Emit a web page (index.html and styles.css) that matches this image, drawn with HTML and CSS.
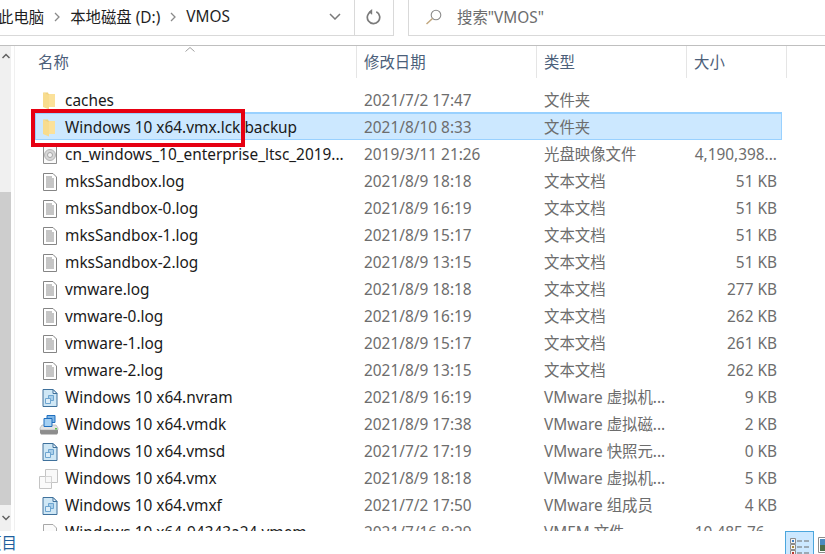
FILE: index.html
```html
<!DOCTYPE html>
<html lang="zh-CN">

<head>
  <meta charset="UTF-8">
  <title>VMOS</title>
  <link rel="stylesheet" href="styles.css">
</head>

<body>
  <svg class="sprites" xmlns="http://www.w3.org/2000/svg">
    <symbol id="i-folder" viewBox="0 0 16 18">
      <path d="M6 2h7v13H6z" fill="#fbe19a" />
      <path d="M1 .5l6 2.500v14.500l-6-2.500z" fill="#f8dc8e" />
      <path d="M1 .5h5l1 2.500H6z" fill="#f0d27e" />
    </symbol>
    <symbol id="i-disc" viewBox="0 0 16 18">
      <path d="M1.500 .5h13v17h-13z" fill="#fafafa" stroke="#8f8f8f" />
      <circle cx="8" cy="9" r="5.500" fill="#d6d6d6" stroke="#b4b4b4" />
      <circle cx="8" cy="9" r="2.500" fill="#f4f4f4" stroke="#a6a6a6" />
    </symbol>
    <symbol id="i-text" viewBox="0 0 16 18">
      <path d="M1.500 .5h9.500l3.500 3.500v13.500h-13z" fill="#fff" stroke="#858585" />
      <path d="M4 4h6M4 6h8M4 8h8M4 10h8M4 12h8M4 14h8" stroke="#8c8c8c" />
    </symbol>
    <symbol id="i-vmdoc" viewBox="0 0 16 18">
      <path d="M1 .5h10l4 4v13H1z" fill="#cfe7f5" stroke="#3f719c" />
      <path d="M11 .5v4h4z" fill="#f2f8fc" stroke="#3f719c" />
      <path d="M6.500 6.500h5v5h-5z" fill="#a9cfea" stroke="#6ea5d0" />
      <path d="M3.500 9.500h5v5h-5z" fill="#dcedf8" stroke="#6ea5d0" />
    </symbol>
    <symbol id="i-vmdisk" viewBox="0 0 20 20">
      <path d="M1 13h18v5l-1 1.500H2L1 18z" fill="#8d8d8d" />
      <path d="M1 13l2-3h14l2 3v2H1z" fill="#e4e4e4" stroke="#999" stroke-width=".5" />
      <path d="M8 .5h8v7H8z" fill="#7fb6e6" stroke="#1f6fbf" />
      <path d="M5 3.500h8v8H5z" fill="#a5d0f2" stroke="#1f6fbf" />
      <path d="M16 13h2v1.500h-2z" fill="#5ec24a" />
    </symbol>
    <symbol id="i-vmx" viewBox="0 0 20 20">
      <path d="M.5 7.500h12v12H.5z" fill="#fafafa" stroke="#c4c4c4" />
      <path d="M6.500 .5h12v13h-12z" fill="#f6f6f6" fill-opacity=".7" stroke="#c4c4c4" />
      <path d="M6.500 7.500h6v6h-6z" fill="none" stroke="#d4d4d4" />
    </symbol>
    <symbol id="i-blank" viewBox="0 0 16 18">
      <path d="M1.500 .5h9.500l3.500 3.500v13.500h-13z" fill="#fbfbfb" stroke="#a8a8a8" />
    </symbol>
  </svg>

  <header class="toolbar">
    <div class="address">
      <span class="crumb crumb-first">此电脑</span>
      <svg class="crumb-sep" viewBox="0 0 6 10"><path d="M1 1l4 4-4 4" fill="none" stroke="#8a8a8a" stroke-width="1.300" /></svg>
      <span class="crumb">本地磁盘 (D:)</span>
      <svg class="crumb-sep" viewBox="0 0 6 10"><path d="M1 1l4 4-4 4" fill="none" stroke="#8a8a8a" stroke-width="1.300" /></svg>
      <span class="crumb">VMOS</span>
      <svg class="drop" viewBox="0 0 12 7"><path d="M1 1l5 5 5-5" fill="none" stroke="#7a7a7a" stroke-width="1.500" /></svg>
      <div class="refresh">
        <svg viewBox="0 0 16 16" width="16" height="16">
          <path d="M10.300 2.800A6.200 6.200 0 1 1 5.200 2.600" fill="none" stroke="#7b7b7b" stroke-width="1.700" />
          <path d="M9.200 0v5.500h-.6L5.800 2.800z" fill="#7b7b7b" transform="translate(-3 0)" />
        </svg>
      </div>
    </div>
    <div class="search">
      <svg viewBox="0 0 18 16" width="18" height="16">
        <circle cx="11" cy="6" r="4.800" fill="none" stroke="#8b8b8b" stroke-width="1.100" />
        <path d="M7.500 9.500L1.500 15" stroke="#c2a77e" stroke-width="1.500" />
      </svg>
      <span>搜索"VMOS"</span>
    </div>
  </header>

  <main class="body">
    <div class="nav-edge">
      <div class="scroll">
        <svg class="scroll-up" viewBox="0 0 8 6"><path d="M.5 5L4 1.500 7.500 5" fill="none" stroke="#606060" stroke-width="1.500" /></svg>
        <div class="scroll-thumb"></div>
        <svg class="scroll-down" viewBox="0 0 8 6"><path d="M.5 1L4 4.500 7.500 1" fill="none" stroke="#606060" stroke-width="1.500" /></svg>
      </div>
    </div>

    <section class="files">
      <div class="head">
        <div class="head-cell head-name">名称
          <svg class="sort" viewBox="0 0 10 5"><path d="M.5 4.500L5 .5l4.500 4" fill="none" stroke="#a0a0a0" /></svg>
        </div>
        <div class="head-cell">修改日期</div>
        <div class="head-cell">类型</div>
        <div class="head-cell">大小</div>
      </div>

      <div class="rows">
        <div class="row">
          <span class="name"><svg class="icon"><use href="#i-folder" /></svg>caches</span>
          <span>2021/7/2 17:47</span><span>文件夹</span><span class="size"></span>
        </div>
        <div class="row row-selected">
          <span class="name"><svg class="icon"><use href="#i-folder" /></svg>Windows 10 x64.vmx.lck.backup</span>
          <span>2021/8/10 8:33</span><span>文件夹</span><span class="size"></span>
        </div>
        <div class="row">
          <span class="name"><svg class="icon"><use href="#i-disc" /></svg>cn_windows_10_enterprise_ltsc_2019...</span>
          <span>2019/3/11 21:26</span><span>光盘映像文件</span><span class="size">4,190,398...</span>
        </div>
        <div class="row">
          <span class="name"><svg class="icon"><use href="#i-text" /></svg>mksSandbox.log</span>
          <span>2021/8/9 18:18</span><span>文本文档</span><span class="size">51 KB</span>
        </div>
        <div class="row">
          <span class="name"><svg class="icon"><use href="#i-text" /></svg>mksSandbox-0.log</span>
          <span>2021/8/9 16:19</span><span>文本文档</span><span class="size">51 KB</span>
        </div>
        <div class="row">
          <span class="name"><svg class="icon"><use href="#i-text" /></svg>mksSandbox-1.log</span>
          <span>2021/8/9 15:17</span><span>文本文档</span><span class="size">51 KB</span>
        </div>
        <div class="row">
          <span class="name"><svg class="icon"><use href="#i-text" /></svg>mksSandbox-2.log</span>
          <span>2021/8/9 13:15</span><span>文本文档</span><span class="size">51 KB</span>
        </div>
        <div class="row">
          <span class="name"><svg class="icon"><use href="#i-text" /></svg>vmware.log</span>
          <span>2021/8/9 18:18</span><span>文本文档</span><span class="size">277 KB</span>
        </div>
        <div class="row">
          <span class="name"><svg class="icon"><use href="#i-text" /></svg>vmware-0.log</span>
          <span>2021/8/9 16:19</span><span>文本文档</span><span class="size">262 KB</span>
        </div>
        <div class="row">
          <span class="name"><svg class="icon"><use href="#i-text" /></svg>vmware-1.log</span>
          <span>2021/8/9 15:17</span><span>文本文档</span><span class="size">261 KB</span>
        </div>
        <div class="row">
          <span class="name"><svg class="icon"><use href="#i-text" /></svg>vmware-2.log</span>
          <span>2021/8/9 13:15</span><span>文本文档</span><span class="size">262 KB</span>
        </div>
        <div class="row">
          <span class="name"><svg class="icon"><use href="#i-vmdoc" /></svg>Windows 10 x64.nvram</span>
          <span>2021/8/9 16:19</span><span>VMware 虚拟机...</span><span class="size">9 KB</span>
        </div>
        <div class="row">
          <span class="name"><svg class="icon icon-wide"><use href="#i-vmdisk" /></svg>Windows 10 x64.vmdk</span>
          <span>2021/8/9 17:38</span><span>VMware 虚拟磁...</span><span class="size">2 KB</span>
        </div>
        <div class="row">
          <span class="name"><svg class="icon"><use href="#i-vmdoc" /></svg>Windows 10 x64.vmsd</span>
          <span>2021/7/2 17:19</span><span>VMware 快照元...</span><span class="size">0 KB</span>
        </div>
        <div class="row">
          <span class="name"><svg class="icon icon-wide"><use href="#i-vmx" /></svg>Windows 10 x64.vmx</span>
          <span>2021/8/9 18:18</span><span>VMware 虚拟机...</span><span class="size">5 KB</span>
        </div>
        <div class="row">
          <span class="name"><svg class="icon"><use href="#i-vmdoc" /></svg>Windows 10 x64.vmxf</span>
          <span>2021/7/2 17:50</span><span>VMware 组成员</span><span class="size">4 KB</span>
        </div>
        <div class="row">
          <span class="name"><svg class="icon"><use href="#i-blank" /></svg>Windows 10 x64-94343a24.vmem</span>
          <span>2021/7/16 8:29</span><span>VMEM 文件</span><span class="size">10,485,76...</span>
        </div>
      </div>
    </section>
  </main>

  <footer class="status">
    <span class="status-count">项目</span>
    <div class="views">
      <div class="view view-on">
        <svg viewBox="0 0 20 18" width="20" height="18">
          <path d="M.5 .5h5v5h-5zM.5 6.500h5v5h-5zM.5 12.500h5v5h-5z" fill="#f4f4f4" stroke="#8c8c8c" />
          <path d="M2 2h2v2H2z" fill="#3f7fc4" /><path d="M2 8h2v2H2z" fill="#a98a3c" /><path d="M2 14h2v2H2z" fill="#b8372c" />
          <path d="M7 3h5M14 3h5M7 9h5M14 9h5M7 15h5M14 15h5" stroke="#6a6a6a" stroke-width="1.200" />
        </svg>
      </div>
      <div class="view">
        <svg viewBox="0 0 16 16" width="16" height="16">
          <path d="M.5 .5h15v15H.5z" fill="#fff" stroke="#8c8c8c" />
          <path d="M2 2h12v6H2z" fill="#4a8cc0" /><path d="M2 8h12v6H2z" fill="#4e6f4a" />
        </svg>
      </div>
    </div>
  </footer>

  <div class="mark"></div>
</body>

</html>
```

FILE: styles.css
```css
* {
  box-sizing: border-box;
}

html,
body {
  margin: 0;
  height: 100%;
}

body {
  position: relative;
  display: flex;
  flex-direction: column;
  width: 825px;
  height: 554px;
  overflow: hidden;
  background: #fff;
  color: #6d6d6d;
  font-family: "Noto Sans", "Noto Sans CJK SC", sans-serif;
  font-size: 15.400px;
}

.sprites {
  display: none;
}

/* top bar */
.toolbar {
  display: flex;
  flex: none;
  height: 46px;
  gap: 14px;
  padding-bottom: 9px;
  border-bottom: 1px solid #bfbfbf;
}

.address {
  display: flex;
  align-items: center;
  width: 394px;
  border-right: 1px solid #d9d9d9;
  border-bottom: 1px solid #d9d9d9;
  color: #1f1f1f;
  overflow: hidden;
}

.crumb,
.crumb-sep,
.drop {
  margin-bottom: 2px;
}

.crumb-first {
  margin-left: -2px;
}

.crumb-sep {
  width: 6px;
  height: 10px;
  margin-left: 10px;
  margin-right: 10px;
}

.drop {
  width: 12px;
  height: 7px;
  margin-left: auto;
  margin-right: 13px;
}

.refresh {
  display: flex;
  align-items: center;
  justify-content: center;
  flex: none;
  width: 39px;
  height: 100%;
  padding-bottom: 2px;
  border-left: 1px solid #d9d9d9;
}

.search {
  display: flex;
  flex: 1;
  align-items: center;
  gap: 14px;
  padding-left: 16px;
  padding-bottom: 2px;
  border-left: 1px solid #d9d9d9;
  border-bottom: 1px solid #d9d9d9;
}

/* list area */
.body {
  display: flex;
  flex: 1;
  min-height: 0;
}

.nav-edge {
  flex: none;
  width: 15px;
  border-right: 1px solid #f0f0f0;
}

.scroll {
  display: flex;
  flex-direction: column;
  align-items: center;
  width: 11px;
  height: 100%;
  padding-top: 7px;
  background: #f0f0f0;
}

.scroll-up,
.scroll-down {
  flex: none;
  width: 8px;
  height: 6px;
}

.scroll-thumb {
  width: 100%;
  height: 313px;
  margin-top: 133px;
  background: #cdcdcd;
}

.scroll-down {
  margin-top: 10px;
}

.files {
  flex: 1;
  min-width: 0;
  overflow: hidden;
}

.head {
  display: grid;
  grid-template-columns: 327px 180px 150px 100px;
  height: 32px;
  margin-left: 15px;
  color: #4c607a;
}

.head-cell {
  position: relative;
  display: flex;
  align-items: center;
  padding-left: 7px;
  padding-bottom: 2px;
  border-right: 1px solid #e5e5e5;
}

.head-name {
  padding-left: 8px;
}

.sort {
  position: absolute;
  top: 1px;
  left: 155px;
  width: 10px;
  height: 5px;
}

.rows {
  margin-top: 8px;
  margin-left: 20px;
}

.row {
  display: grid;
  grid-template-columns: 328px 180px 150px 83px;
  align-items: center;
  width: 747px;
  height: 27px;
  line-height: 27px;
  white-space: nowrap;
  border: 1px solid transparent;
}

.row-selected {
  background: #cce8ff;
  border-color: #99d1ff;
  box-shadow: 0 -1px 0 #99d1ff;
}

.name {
  display: flex;
  align-items: center;
  padding-left: 6px;
  color: #1a1a1a;
}

.icon {
  flex: none;
  width: 16px;
  height: 18px;
  margin-right: 7px;
}

.icon-wide {
  width: 20px;
  height: 20px;
  margin-left: -3px;
  margin-right: 6px;
}

.size {
  text-align: right;
}

/* bottom bar */
.status {
  display: flex;
  flex: none;
  align-items: flex-end;
  justify-content: space-between;
  height: 23px;
  background: #fff;
  color: #1f5f9e;
}

.status-count {
  margin-left: -14px;
  line-height: 21px;
}

.views {
  display: flex;
  gap: 4px;
  align-self: stretch;
  align-items: flex-start;
  margin-right: -9px;
}

.view {
  display: flex;
  justify-content: center;
  padding-top: 6px;
}

.view-on {
  width: 29px;
  height: 23px;
  background: #cce8ff;
  border: 1px solid #4ba6dd;
  border-bottom: 0;
}

/* red annotation box */
.mark {
  position: absolute;
  top: 109px;
  left: 31px;
  width: 214px;
  height: 38px;
  border: 4px solid #e60012;
}
```
